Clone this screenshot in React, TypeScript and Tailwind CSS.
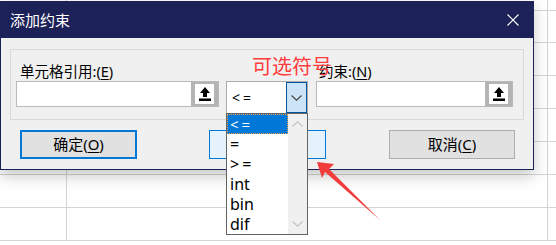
import React from 'react';

// Excel "添加约束" dialog with the operator drop-down opened over a sheet.

const FONT = "font-['Noto_Sans','Noto_Sans_CJK_SC',sans-serif]";

const ROWS = ['h-[11px]', 'h-[32px]', 'h-[33px]', 'h-[33px]', 'h-[33px]', 'h-[33px]', 'h-[33px]', 'h-[33px]'];
const OPTIONS = ['<=', '=', '>=', 'int', 'bin', 'dif'];

function PickIcon() {
  return (
    <svg width={12} height={14} viewBox="0 0 12 14" aria-hidden>
      <polygon points="6,0 11,6 8,6 8,10 4,10 4,6 1,6" fill="#000" />
      <rect x={0} y={11.5} width={12} height={2.5} fill="#000" />
    </svg>
  );
}

function RefInput() {
  return (
    <div className="flex h-[26px] border border-[#b9b9b9] bg-white">
      <div className="flex-1" />
      <div className="flex w-[27px] items-center justify-center bg-[#b4b4b4]">
        <div className="flex h-[20px] w-[19px] items-center justify-center bg-white">
          <PickIcon />
        </div>
      </div>
    </div>
  );
}

function Chevron({ up, color }: { up?: boolean; color: string }) {
  return (
    <svg width={11} height={6} viewBox="0 0 11 6" fill="none" stroke={color} strokeWidth={1.1} aria-hidden>
      <path d={up ? 'M0.5 5.5L5.5 0.8L10.5 5.5' : 'M0.5 0.5L5.5 5.2L10.5 0.5'} />
    </svg>
  );
}

function Combo() {
  return (
    <div className="relative">
      <div className="flex h-[33px] border border-[#adadad] bg-white">
        <div className="flex flex-1 items-center pl-[5px] text-[14px] tracking-[3px] text-black">&lt;=</div>
        <div className="flex w-[21px] items-center justify-center border border-[#005499] bg-[#cce4f7]">
          <Chevron color="#404040" />
        </div>
      </div>
      {/* opened list */}
      <div className="absolute left-0 top-[32px] z-10 flex h-[122px] w-[82px] border border-[#646464] bg-white">
        <div className="flex flex-1 flex-col">
          {OPTIONS.map((o, i) => (
            <div
              key={o}
              className={
                i === 0
                  ? 'flex h-[20px] items-center border border-dotted border-[#f0a040] bg-[#0078d7] pl-[2px] text-[15px] tracking-[3px] text-white'
                  : 'flex h-[20px] items-center pl-[3px] text-[16px] text-black'
              }
            >
              {o === '<=' || o === '>=' ? <span className="tracking-[3px]">{o}</span> : o}
            </div>
          ))}
        </div>
        <div className="flex w-[19px] flex-col items-center justify-between bg-[#f0f0f0] py-[7px]">
          <Chevron up color="#c2c2c2" />
          <Chevron color="#c2c2c2" />
        </div>
      </div>
    </div>
  );
}

export default function App() {
  return (
    <div className={`relative h-[245px] w-[556px] overflow-hidden bg-white ${FONT}`}>
      {/* sheet grid behind the dialog */}
      <div className="flex flex-col">
        {ROWS.map((h, i) => (
          <div key={i} className={`grid grid-cols-[67px_481px_1fr] border-b border-[#d4d4d4] ${h}`}>
            <div className="border-r border-[#d4d4d4]" />
            <div className="border-r border-[#d4d4d4]" />
            <div />
          </div>
        ))}
      </div>

      {/* dialog window */}
      <div className="absolute left-0 top-[1px] flex h-[169px] w-[534px] flex-col border border-[#1c2157] bg-[#f0f0f0] shadow-[0_6px_14px_rgba(0,0,0,0.22)]">
        <div className="flex h-[36px] items-center justify-between bg-[#1c2157] pl-[9px] pr-[14px]">
          <span className="text-[15px] text-white">添加约束</span>
          <svg width={12} height={12} viewBox="0 0 12 12" stroke="#fff" strokeWidth={1.1} aria-hidden>
            <path d="M0.5 0.5L11.5 11.5M11.5 0.5L0.5 11.5" />
          </svg>
        </div>

        <div className="flex flex-1 flex-col">
          <div className="ml-[9px] mt-[11px] flex h-[71px] w-[514px] border border-[#dadada] pt-[12px]">
            <div className="ml-[5px] w-[203px]">
              <div className="pl-[4px] text-[14.5px] leading-[19px] text-black">
                单元格引用:(<span className="underline underline-offset-2">E</span>)
              </div>
              <RefInput />
            </div>
            <div className="ml-[7px] w-[82px] pt-[19px]">
              <Combo />
            </div>
            <div className="ml-[8px] w-[197px]">
              <div className="pl-[3px] text-[14.5px] leading-[19px] text-black">
                约束:(<span className="underline underline-offset-2">N</span>)
              </div>
              <RefInput />
            </div>
          </div>

          <div className="ml-[19px] mt-[10px] flex text-[15px] text-black">
            <button className="flex h-[29px] w-[117px] items-center justify-center border-2 border-[#0078d7] bg-[#e1e1e1]">
              确定(<span className="underline underline-offset-2">O</span>)
            </button>
            <button className="ml-[72px] flex h-[29px] w-[117px] items-center justify-center border border-[#0078d7] bg-[#e5f1fb]">
              添加(<span className="underline underline-offset-2">A</span>)
            </button>
            <button className="ml-[63px] flex h-[29px] w-[126px] items-center justify-center border border-[#adadad] bg-[#e1e1e1]">
              取消(<span className="underline underline-offset-2">C</span>)
            </button>
          </div>
        </div>
      </div>

      {/* annotation */}
      <span className="absolute left-[252px] top-[54px] text-[20px] leading-[26px] text-[#ff3b3b]">可选符号</span>
      <svg className="absolute left-0 top-0" width={556} height={245} aria-hidden>
        <polygon points="317,162 334,164 329,169 380,220 325,172 322,178" fill="#f23b3b" />
      </svg>
    </div>
  );
}
